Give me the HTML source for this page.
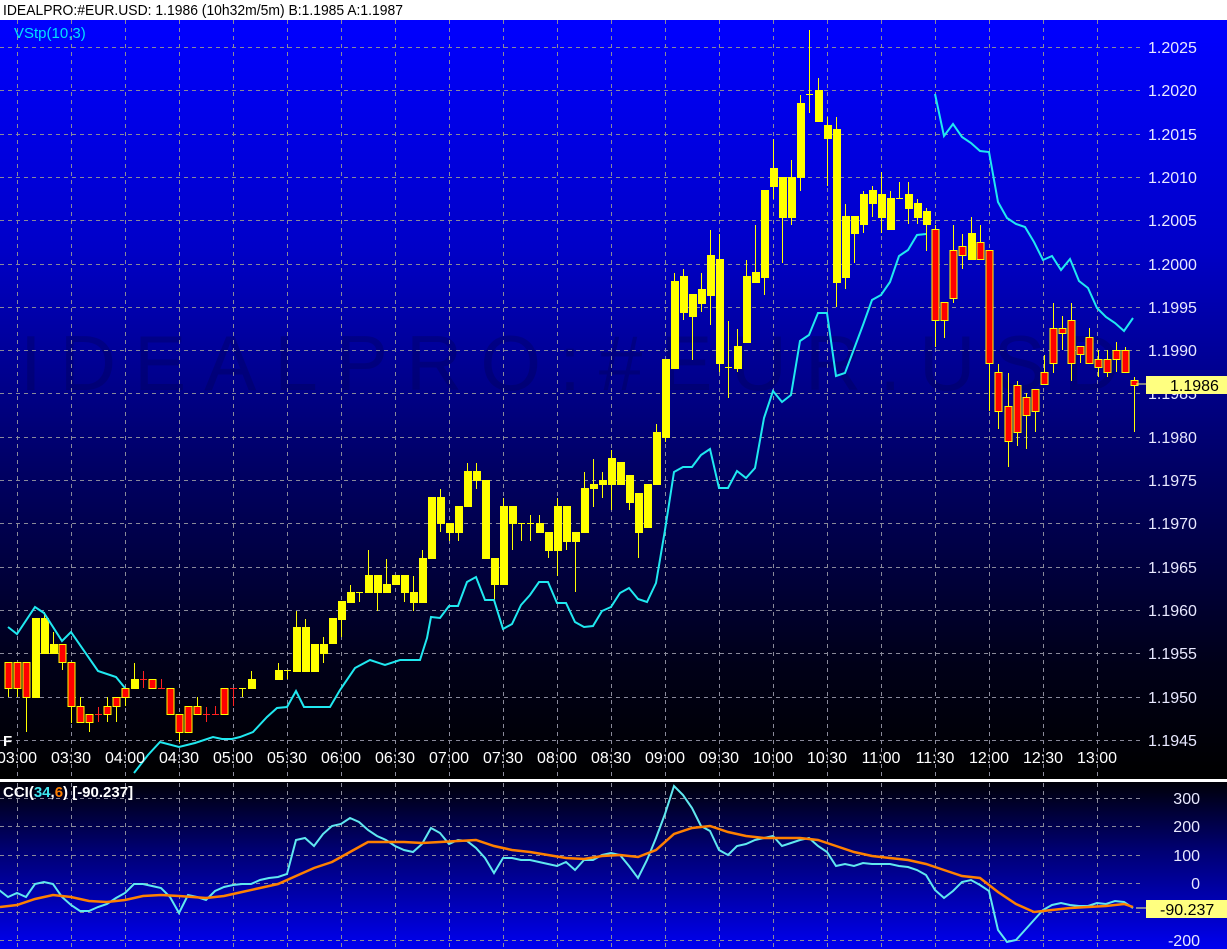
<!DOCTYPE html>
<html><head><meta charset="utf-8"><style>
html,body{margin:0;padding:0;background:#000;width:1227px;height:949px;overflow:hidden}
svg{display:block;font-family:"Liberation Sans",Arial,sans-serif}
</style></head><body>
<svg id="s" width="1227" height="949" viewBox="0 0 1227 949" xmlns="http://www.w3.org/2000/svg">
<defs>
<linearGradient id="gm" gradientUnits="userSpaceOnUse" x1="0" y1="20" x2="0" y2="778">
<stop offset="0" stop-color="#0000ff"/><stop offset="0.3" stop-color="#0000c8"/><stop offset="0.58" stop-color="#000068"/><stop offset="0.85" stop-color="#000018"/><stop offset="1" stop-color="#000000"/>
</linearGradient>
<linearGradient id="gc" gradientUnits="userSpaceOnUse" x1="0" y1="782" x2="0" y2="949">
<stop offset="0" stop-color="#000008"/><stop offset="0.4" stop-color="#000070"/><stop offset="1" stop-color="#0000f0"/>
</linearGradient>
</defs>
<rect x="0" y="0" width="1227" height="20" fill="#fff"/>
<text x="3" y="15" font-size="15" fill="#000" textLength="400" lengthAdjust="spacingAndGlyphs">IDEALPRO:#EUR.USD: 1.1986 (10h32m/5m)  B:1.1985 A:1.1987</text>
<rect x="0" y="20" width="1227" height="759" fill="url(#gm)"/>
<rect x="0" y="779" width="1227" height="3" fill="#fff"/>
<rect x="0" y="782" width="1227" height="167" fill="url(#gc)"/>
<text x="20" y="390" font-size="78" fill="#000030" fill-opacity="0.22" textLength="1100">IDEALPRO:#EUR.USD</text>
<g id="grid" stroke="#8a8a9a" stroke-width="1" stroke-dasharray="4 4" fill="none"></g>
<g id="cand"></g>
<g id="lines" fill="none" stroke-width="2"></g>
<g id="txt" font-size="16" fill="#fff"></g>
<text x="14" y="38" font-size="15" fill="#00e0ff">VStp(10,3)</text>
<text x="3" y="746" font-size="15" font-weight="bold" fill="#fff">F</text>
<text x="3" y="797" font-size="15" font-weight="bold" fill="#fff">CCI(<tspan fill="#40e8f0">34</tspan>,<tspan fill="#ff8000">6</tspan>)  [-90.237]</text>
<line x1="1136" y1="384" x2="1146" y2="384" stroke="#ffff80" stroke-width="1"/>
<rect x="1146" y="376" width="81" height="18" fill="#ffff80"/>
<text x="1170" y="391" font-size="16" fill="#000">1.1986</text>
<line x1="1136" y1="908" x2="1146" y2="908" stroke="#ffff80" stroke-width="1"/>
<rect x="1146" y="900" width="81" height="18" fill="#ffff80"/>
<text x="1160" y="915" font-size="16" fill="#000">-90.237</text>
</svg>
<script>
var NS="http://www.w3.org/2000/svg";
function el(p,t,a,txt){var e=document.createElementNS(NS,t);for(var k in a)e.setAttribute(k,a[k]);if(txt!=null)e.textContent=txt;document.getElementById(p).appendChild(e);return e;}
for(var i=0;i<17;i++){var y=Math.round(47+i*43.3)+0.5;el('grid','line',{x1:0,y1:y,x2:1140,y2:y});}
for(var k=0;k<=20;k++){var x=17+54*k+0.5;el('grid','line',{x1:x,y1:20,x2:x,y2:778});el('grid','line',{x1:x,y1:783,x2:x,y2:949});}
[798,826,855,883,912,940].forEach(function(y){el('grid','line',{x1:0,y1:y+0.5,x2:1140,y2:y+0.5});});
for(var i=0;i<17;i++){var p=(1.2025-i*0.0005).toFixed(4);el('txt','text',{x:1148,y:Math.round(47+i*43.3)+6,fill:'#e8e8ff'},p);}
var cl=[['300',798],['200',826],['100',855],['0',883],['-100',912],['-200',940]];
cl.forEach(function(c){el('txt','text',{x:1200,y:c[1]+6,'text-anchor':'end',fill:'#e8e8ff'},c[0]);});
for(var k=0;k<=20;k++){var h=3+Math.floor(k/2),m=k%2?'30':'00';el('txt','text',{x:17+54*k,y:763,'text-anchor':'middle'},(h<10?'0':'')+h+':'+m);}
var C=[
[8,662,688,662,697,'r'],[17,662,688,662,697,'r'],[26,662,697,662,732,'r'],[35,618,697,618,697,'y'],[44,618,653,612,653,'y'],[53,644,653,632,653,'y'],[62,644,662,644,670,'r'],[71,662,706,662,723,'r'],[80,706,722,697,722,'r'],[89,714,722,714,732,'r'],[98,714,714,707,722,'r'],[107,706,714,697,722,'r'],[116,697,706,697,722,'r'],[125,688,697,688,706,'r'],[134,679,688,663,688,'y'],[143,679,679,671,688,'r'],[152,679,688,679,688,'r'],[161,688,688,679,688,'r'],[170,688,714,688,714,'r'],[179,714,732,714,742,'r'],[188,706,732,706,732,'r'],[197,706,714,697,714,'r'],[206,714,714,707,722,'r'],[215,714,714,706,714,'r'],[224,688,714,688,714,'r'],[233,688,688,688,706,'r'],[242,688,688,688,697,'y'],[251,679,688,671,688,'y'],[278,670,679,663,679,'y'],[287,670,670,670,679,'y'],[296,627,671,611,671,'y'],[305,627,671,619,671,'y'],[314,644,671,644,671,'y'],[323,644,653,637,663,'y'],
[332,618,643,618,643,'y'],[341,601,619,601,637,'y'],[350,592,602,585,602,'y'],[359,592,592,592,602,'y'],[368,575,592,550,592,'y'],[377,575,592,575,611,'y'],[386,584,592,559,592,'y'],[395,575,584,575,584,'y'],[404,575,592,575,602,'y'],[413,592,602,576,611,'y'],[422,558,602,550,602,'y'],[431,497,558,497,558,'y'],[440,497,523,489,532,'y'],[449,523,532,523,541,'y'],[458,506,532,506,541,'y'],[467,471,506,463,506,'y'],[476,471,480,463,489,'y'],[485,480,558,480,558,'y'],[494,558,584,558,600,'y'],[503,506,584,498,584,'y'],[512,506,523,506,550,'y'],[521,523,523,523,541,'y'],[530,523,523,515,541,'y'],[539,523,532,515,532,'y'],[548,532,550,532,558,'y'],[557,506,550,498,576,'y'],[566,506,541,506,550,'y'],[575,532,541,532,592,'y'],[584,488,532,472,532,'y'],[593,484,488,459,507,'y'],[602,480,484,472,498,'y'],[611,458,484,450,510,'y'],[620,462,484,462,484,'y'],[629,475,502,475,510,'y'],[638,493,532,493,558,'y'],[647,484,527,484,527,'y'],[656,432,484,424,484,'y'],
[665,359,437,359,442,'y'],[674,281,368,273,368,'y'],[683,276,312,269,320,'y'],[692,294,316,294,360,'y'],[701,289,303,273,312,'y'],[710,255,295,230,325,'y'],[719,259,363,234,372,'y'],[728,367,367,321,398,'y'],[737,346,368,329,372,'y'],[746,276,342,260,342,'y'],[755,272,282,225,282,'y'],[764,190,277,190,295,'y'],[773,168,186,139,199,'y'],[782,177,217,177,263,'y'],[791,177,217,160,225,'y'],[800,103,177,95,191,'y'],[809,94,94,30,113,'y'],[818,90,121,78,121,'y'],[827,125,138,117,186,'y'],[836,129,282,117,307,'y'],[845,216,277,204,289,'y'],[854,216,233,216,263,'y'],[863,194,224,191,233,'y'],[872,190,203,186,217,'y'],[881,194,217,172,233,'y'],[890,198,229,191,229,'y'],[899,198,198,182,198,'y'],[908,194,208,182,224,'y'],[917,203,217,199,224,'y'],[926,211,224,208,251,'y'],
[935,229,320,225,347,'r'],[944,302,320,302,338,'r'],[953,250,298,225,303,'r'],[962,246,255,234,269,'r'],[971,233,259,217,259,'y'],[980,242,259,225,259,'r'],[989,250,363,250,411,'r'],[998,372,411,364,429,'r'],[1008,406,441,373,467,'r'],[1017,385,432,381,446,'r'],[1026,397,415,393,449,'r'],[1035,389,411,389,432,'r'],[1044,372,384,355,384,'r'],[1053,328,363,303,373,'r'],[1062,328,333,316,350,'r'],[1071,320,363,303,381,'r'],[1080,346,354,346,363,'r'],[1089,337,363,328,363,'r'],[1098,359,367,350,377,'r'],[1107,359,372,350,377,'r'],[1116,350,359,342,372,'r'],[1125,350,372,347,372,'r'],[1134,380,385,377,432,'r']];
C.forEach(function(c){
 var x=c[0],t=c[1],b=c[2],hi=c[3],lo=c[4],red=c[5]=='r';
 var wc=(red&&t==b)?'#ff2020':'#ffff00';
 el('cand','line',{x1:x+0.5,y1:hi,x2:x+0.5,y2:lo,stroke:wc,'stroke-width':1});
 if(t==b){el('cand','line',{x1:x-3,y1:t+0.5,x2:x+4,y2:t+0.5,stroke:wc,'stroke-width':1});}
 else if(red){el('cand','rect',{x:x-3,y:t+0.5,width:7,height:b-t,fill:'#ff0000',stroke:'#ffff00','stroke-width':1});}
 else{el('cand','rect',{x:x-3,y:t,width:8,height:b-t+1,fill:'#ffff00'});}
});
function pl(pts,col,w){el('lines','polyline',{points:pts.join(' '),stroke:col,'stroke-width':w});}
pl([[8,627],[17,634],[35,607],[44,613],[62,641],[71,632],[98,671],[116,677],[125,688]],'#20e8f0',2);
pl([[134,773],[148,755],[160,742],[179,747],[195,743],[213,737],[222,739],[232,739],[240,737],[253,732],[267,717],[277,708],[287,707],[296,691],[304,707],[330,707],[340,690],[355,668],[370,660],[385,665],[400,660],[420,660],[427,638],[431,617],[440,618],[449,606],[458,606],[467,582],[476,577],[485,600],[494,600],[503,629],[512,624],[521,605],[530,595],[539,582],[548,582],[557,603],[566,603],[575,622],[584,627],[593,626],[602,611],[611,607],[620,593],[629,588],[638,599],[647,602],[656,583],[665,530],[674,472],[683,467],[692,467],[701,455],[710,449],[719,488],[728,488],[737,471],[746,478],[755,468],[764,418],[773,391],[782,402],[791,395],[800,341],[809,335],[818,313],[827,313],[836,376],[845,373],[854,349],[863,325],[872,300],[881,295],[890,282],[899,256],[908,250],[917,235],[926,234]],'#20e8f0',2);
pl([[935,94],[944,136],[953,124],[962,137],[971,143],[980,151],[989,152],[998,202],[1007,218],[1016,224],[1025,227],[1034,242],[1043,260],[1052,256],[1061,270],[1070,259],[1079,281],[1088,288],[1097,308],[1106,317],[1115,323],[1124,331],[1133,318]],'#20e8f0',2);
var cy=[890,897,893,897,884,882,884,897,905,911,911,907,904,898,893,884,884,886,888,897,913,895,897,900,891,887,885,884,884,880,878,877,874,840,838,846,834,826,824,818,822,830,836,840,846,850,852,844,828,833,844,840,841,848,858,873,858,858,860,860,862,864,866,862,870,860,860,855,853,855,866,878,860,838,814,786,795,808,826,831,850,855,846,844,840,838,836,846,843,840,838,846,852,866,864,866,863,864,864,864,866,867,870,875,890,898,891,882,880,885,891,930,942,940,930,920,910,905,903,905,906,906,903,904,901,902,908];
var cp=[];cy.forEach(function(y,i){cp.push([i*9-1,y]);});
pl(cp,'#60e8f0',2);
pl([[0,907],[17,905],[35,899],[53,895],[71,897],[89,901],[107,902],[125,900],[143,896],[161,895],[179,896],[206,898],[224,896],[242,892],[260,888],[278,884],[296,876],[314,868],[332,862],[350,852],[368,842],[386,842],[404,842],[422,843],[440,842],[458,841],[476,840],[494,846],[512,850],[530,852],[548,855],[566,858],[584,859],[602,856],[620,855],[638,857],[656,850],[674,834],[692,828],[710,826],[728,832],[746,836],[764,838],[782,838],[800,838],[818,840],[836,846],[854,852],[872,856],[890,858],[908,860],[926,864],[944,870],[962,876],[980,878],[998,892],[1016,904],[1034,912],[1052,910],[1070,908],[1088,907],[1106,906],[1124,904],[1133,907]],'#ff8000',2.5);
</script>
</body></html>
